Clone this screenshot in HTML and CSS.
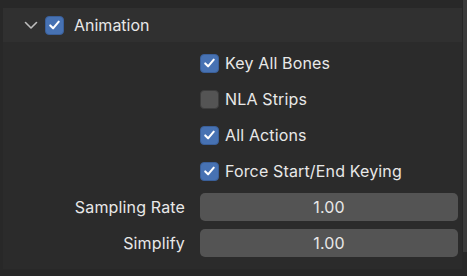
FILE: index.html
```html
<!DOCTYPE html>
<html>
<head>
<title>Animation</title>
<link rel="stylesheet" href="styles.css">
</head>
<body>
  <div class="panel">
    <div class="panel-header">
      <svg class="chevron" width="14" height="9" viewBox="0 0 14 9">
        <path d="M1.5 1.5 L7 7 L12.5 1.5" fill="none" stroke="#bdbdbd" stroke-width="1.6" stroke-linecap="round" stroke-linejoin="round"/>
      </svg>
      <span class="check on">
        <svg width="18" height="18" viewBox="0 0 18 18"><path d="M4.5 9.5 L7.5 12.5 L13.5 5.5" fill="none" stroke="#fff" stroke-width="2.2" stroke-linecap="round" stroke-linejoin="round"/></svg>
      </span>
      <span class="title">Animation</span>
    </div>

    <div class="panel-body">
      <div class="check-row">
        <span class="check on">
          <svg width="18" height="18" viewBox="0 0 18 18"><path d="M4.5 9.5 L7.5 12.5 L13.5 5.5" fill="none" stroke="#fff" stroke-width="2.2" stroke-linecap="round" stroke-linejoin="round"/></svg>
        </span>
        <span class="label">Key All Bones</span>
      </div>
      <div class="check-row">
        <span class="check off"></span>
        <span class="label">NLA Strips</span>
      </div>
      <div class="check-row">
        <span class="check on">
          <svg width="18" height="18" viewBox="0 0 18 18"><path d="M4.5 9.5 L7.5 12.5 L13.5 5.5" fill="none" stroke="#fff" stroke-width="2.2" stroke-linecap="round" stroke-linejoin="round"/></svg>
        </span>
        <span class="label">All Actions</span>
      </div>
      <div class="check-row">
        <span class="check on">
          <svg width="18" height="18" viewBox="0 0 18 18"><path d="M4.5 9.5 L7.5 12.5 L13.5 5.5" fill="none" stroke="#fff" stroke-width="2.2" stroke-linecap="round" stroke-linejoin="round"/></svg>
        </span>
        <span class="label">Force Start/End Keying</span>
      </div>

      <div class="fields">
        <span class="field-label">Sampling Rate</span>
        <div class="num-field">1.00</div>
        <span class="field-label">Simplify</span>
        <div class="num-field">1.00</div>
      </div>
    </div>
  </div>
  <div class="scrollbar"></div>
</body>
</html>
```

FILE: styles.css
```css
body, html {
  margin: 0;
  padding: 0;
}

body {
  background: #282828;
  width: 467px;
  height: 276px;
  overflow: hidden;
  position: relative;
  font-family: Inter, "Noto Sans", sans-serif;
  font-size: 16px;
  letter-spacing: 0.15px;
  color: #e8e8e8;
}

.panel {
  margin: 8px 5px 0 3px;
}

.panel-header {
  height: 34px;
  background: #303030;
  display: flex;
  align-items: center;
  padding-left: 21px;
}

.chevron {
  margin-right: 7px;
}

.check {
  box-sizing: border-box;
  width: 19px;
  height: 19px;
  border-radius: 4px;
  display: inline-flex;
  align-items: center;
  justify-content: center;
  flex: none;
}

.check.on {
  background: #4772b3;
  border: 1px solid #3a5f99;
}

.check.off {
  background: #545454;
  border: 1px solid #3d3d3d;
}

.title {
  margin-left: 10px;
  letter-spacing: 0;
}

.panel-body {
  background: #2b2b2b;
  padding: 3px 4px 12px 0;
}

.check-row {
  height: 36px;
  display: flex;
  align-items: center;
  padding-left: 197px;
}

.check-row .label {
  margin-left: 6px;
}

.fields {
  margin-top: 4px;
  display: grid;
  grid-template-columns: 182px 1fr;
  column-gap: 15px;
  row-gap: 8px;
  align-items: center;
}

.field-label {
  text-align: right;
}

.num-field {
  height: 28px;
  background: #545454;
  border-radius: 5px;
  display: flex;
  align-items: center;
  justify-content: center;
}

.scrollbar {
  position: absolute;
  top: 0;
  left: 462px;
  width: 5px;
  height: 252px;
  background: #3a3a3a;
  border-left: 1px solid #262626;
}
```
